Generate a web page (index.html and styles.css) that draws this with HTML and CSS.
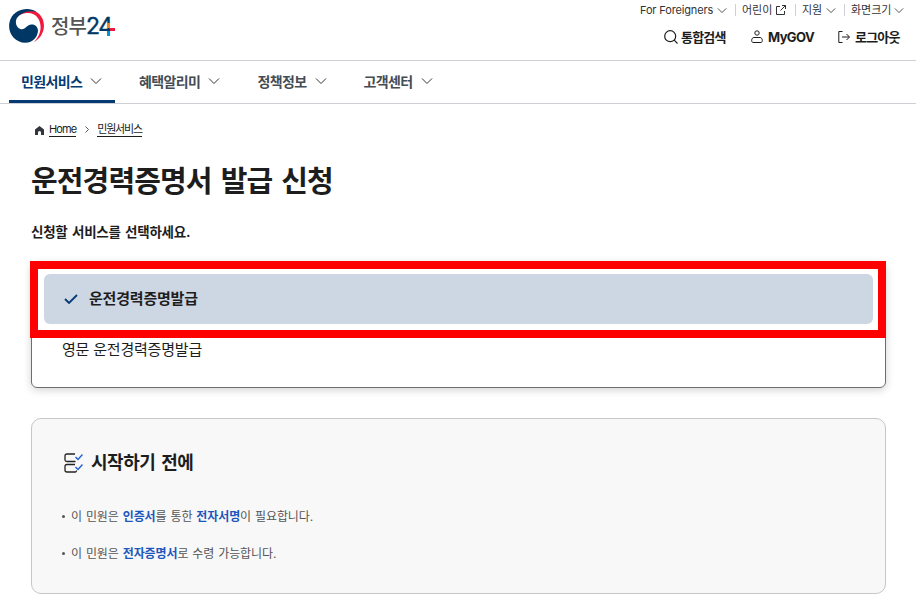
FILE: index.html
```html
<!DOCTYPE html>
<html lang="ko">
<head>
    <meta charset="UTF-8">
    <meta name="viewport" content="width=device-width, initial-scale=1.0">
    <title>운전경력증명서 발급 신청 | 정부24</title>
    <link rel="stylesheet" href="styles.css">
</head>
<body>
    <svg class="sprite" aria-hidden="true">
        <symbol id="chevron" viewBox="0 0 12 8">
            <path d="M1 1.5l5 5 5-5" fill="none" stroke="currentColor"/>
        </symbol>
    </svg>

    <header class="header">
        <a class="logo" href="#">
            <svg class="logo-mark" viewBox="0 0 105 101">
                <path d="M35 9C55-3 86 0 99 26C113 53 101 86 73 100C96 79 101 49 87 27C74 7 43 7 24 24C26 18 30 12 35 9z" fill="#f0193c"/>
                <path d="M84 9C58-9 18 0 5 29C-10 64 13 99 49 101C72 101 86 84 87 65C87 51 75 43 63 47C50 51 47 63 36 60C23 57 17 40 23 28C31 13 59 0 84 9z" fill="#003764"/>
            </svg>
            <span class="logo-name">정부</span>
            <span class="logo-number">24</span>
            <svg class="logo-plus" viewBox="0 0 9 13">
                <path d="M1 0h3v5H1z" fill="#f58220"/>
                <path d="M1 8h3v5H1z" fill="#0095da"/>
                <path d="M4 5h5v3H4z" fill="#ed1941"/>
            </svg>
        </a>

        <div class="header-links">
            <ul class="utility">
                <li class="foreigners"><a href="#">For Foreigners</a><svg class="chevron"><use href="#chevron"/></svg></li>
                <li class="kids"><a href="#">어린이</a>
                    <svg class="external" viewBox="0 0 10 10" fill="none" stroke="currentColor"><path d="M4 1.5H.5v8h8V6M6 .5h3.5V4M9.5.5L4.5 5.5"/></svg>
                </li>
                <li class="support"><a href="#">지원</a><svg class="chevron"><use href="#chevron"/></svg></li>
                <li class="zoom"><a href="#">화면크기</a><svg class="chevron"><use href="#chevron"/></svg></li>
            </ul>
            <ul class="account">
                <li class="search">
                    <svg width="14" height="14" viewBox="0 0 14 14" fill="none" stroke="currentColor" stroke-width="1.2"><circle cx="6.2" cy="6.2" r="5.5"/><path d="M10.2 10.2l3.3 3.3"/></svg>
                    <a href="#">통합검색</a>
                </li>
                <li class="mygov">
                    <svg width="12" height="13" viewBox="0 0 12 13" fill="none" stroke="currentColor"><circle cx="6" cy="3" r="2.2"/><path d="M3 7.5h6c1.3 0 2.3 1.3 2.3 2.8 0 1.4-.5 2.2-1.3 2.2H2c-.8 0-1.3-.8-1.3-2.2C.7 8.8 1.7 7.5 3 7.5z"/></svg>
                    <a href="#">MyGOV</a>
                </li>
                <li class="logout">
                    <svg width="12" height="12" viewBox="0 0 12 12" fill="none" stroke="currentColor"><path d="M4.5.5H.8v11h3.7M4 6h7.2M8.5 3l3 3-3 3"/></svg>
                    <a href="#">로그아웃</a>
                </li>
            </ul>
        </div>
    </header>

    <nav class="nav">
        <a class="nav-item active" href="#">민원서비스<svg class="chevron"><use href="#chevron"/></svg></a>
        <a class="nav-item" href="#">혜택알리미<svg class="chevron"><use href="#chevron"/></svg></a>
        <a class="nav-item" href="#">정책정보<svg class="chevron"><use href="#chevron"/></svg></a>
        <a class="nav-item" href="#">고객센터<svg class="chevron"><use href="#chevron"/></svg></a>
    </nav>

    <main class="content">
        <div class="breadcrumb">
            <svg class="home-icon" viewBox="0 0 9 9"><path d="M4.5 0L9 3.5V9H6V6.5a1.5 1.5 0 0 0-3 0V9H0V3.5z" fill="#33363d"/></svg>
            <a class="crumb-home" href="#">Home</a>
            <svg class="crumb-arrow" viewBox="0 0 4 7"><path d="M.5.5l3 3-3 3" fill="none" stroke="#555"/></svg>
            <a class="crumb-current" href="#">민원서비스</a>
        </div>

        <h1>운전경력증명서 발급 신청</h1>
        <p class="guide">신청할 서비스를 선택하세요.</p>

        <div class="service-list">
            <div class="service selected">
                <svg class="check" viewBox="0 0 14 10"><path d="M1 5l4 4 8-8" fill="none" stroke="#063a74" stroke-width="1.8"/></svg>
                <span>운전경력증명발급</span>
            </div>
            <div class="service">영문 운전경력증명발급</div>
            <div class="highlight"></div>
        </div>

        <section class="before">
            <h2>
                <svg class="list-icon" viewBox="0 0 19 20" fill="none" stroke="#222" stroke-width="1.3">
                    <path d="M11 1H3Q1 1 1 3v4q0 1.5 2 1.5h8.5M11 11.5H3q-2 0-2 2V17q0 2 2 2h8.5q1 0 1-1.5"/>
                    <path d="M11.500 4l2.500 2.500 4.500-5M11.500 14l2.500 2.500 4.500-5" stroke="#2563d4" stroke-width="1.5"/>
                </svg>
                <span>시작하기 전에</span>
            </h2>
            <ul>
                <li>이 민원은 <strong>인증서</strong>를 통한 <strong>전자서명</strong>이 필요합니다.</li>
                <li>이 민원은 <strong>전자증명서</strong>로 수령 가능합니다.</li>
            </ul>
        </section>
    </main>
</body>
</html>
```
FILE: styles.css
```css
* {
    box-sizing: border-box;
}
body {
    margin: 0;
    background-color: #fff;
    color: #1d1d1d;
    font-family: Inter, "Noto Sans CJK KR", sans-serif;
    white-space: nowrap;
    overflow: hidden;
}
ul {
    list-style: none;
    margin: 0;
    padding: 0;
}
a {
    color: inherit;
    text-decoration: none;
}
svg {
    flex: none;
}
.sprite {
    display: none;
}
.chevron {
    width: 12px;
    height: 8px;
}

/* header */
.header {
    display: flex;
    justify-content: space-between;
    height: 61px;
    padding-left: 9px;
    border-bottom: 1px solid #cdd1d5;
}
.logo {
    display: flex;
    align-items: center;
    height: 51px;
}
.logo-mark {
    width: 35px;
    height: 34px;
    margin-right: 7px;
}
.logo-name {
    width: 35px;
    font-size: 20px;
    font-weight: 500;
    letter-spacing: -1px;
    color: #555;
}
.logo-number {
    width: 28px;
    font-size: 23px;
    font-weight: 400;
    letter-spacing: -1.5px;
    color: #003764;
    -webkit-text-stroke: 0.4px #003764;
}
.logo-plus {
    width: 9px;
    height: 13px;
    margin: 8px 0 0 -8px;
}
.header-links {
    width: 276px;
}
.utility,
.account {
    display: flex;
    align-items: center;
}
.utility {
    height: 20px;
    font-size: 11px;
    line-height: 20px;
    color: #333;
}
.utility li {
    display: flex;
    align-items: center;
    height: 12px;
}
.utility li + li {
    border-left: 1px solid #cdd1d5;
    padding-left: 6px;
}
.utility .chevron {
    width: 10px;
    height: 7px;
}
.utility .foreigners {
    width: 95px;
    letter-spacing: -0.15px;
}
.utility .kids {
    width: 60px;
}
.utility .support {
    width: 49px;
}
.utility a {
    margin-right: 4px;
}
.utility .zoom a {
    margin-right: 3px;
}
.external {
    width: 10px;
    height: 10px;
}
.account {
    height: 33px;
    padding-left: 24px;
    font-size: 13px;
    font-weight: 700;
    letter-spacing: -0.8px;
}
.account li {
    display: flex;
    align-items: center;
    gap: 3px;
}
.account .search {
    width: 87px;
}
.account .mygov {
    width: 87px;
    gap: 5px;
    letter-spacing: -0.6px;
}
.account .logout {
    gap: 5px;
}

/* main menu */
.nav {
    display: flex;
    gap: 13px;
    height: 43px;
    padding-left: 9px;
    border-bottom: 1px solid #cdd1d5;
}
.nav-item {
    display: flex;
    align-items: center;
    gap: 8px;
    padding: 0 12px;
    font-size: 14px;
    font-weight: 700;
    letter-spacing: -0.6px;
    color: #464c53;
    border-bottom: 3px solid transparent;
}
.nav-item.active {
    width: 106px;
    margin-right: -1px;
    color: #063a74;
    border-bottom-color: #063a74;
}
.nav-item .chevron {
    color: #333;
}

/* content */
.content {
    padding: 0 30px 0 31px;
}
.breadcrumb {
    display: flex;
    align-items: center;
    height: 16px;
    margin-top: 17px;
    padding-left: 4px;
    font-size: 11px;
}
.breadcrumb a {
    height: 15px;
    line-height: 14px;
    border-bottom: 1px solid #1d1d1d;
}
.home-icon {
    width: 9px;
    height: 9px;
    margin: 2px 5px 0 0;
}
.crumb-home {
    letter-spacing: -0.9px;
}
.crumb-arrow {
    width: 4px;
    height: 7px;
    margin: 1px 8px 0 9px;
}
.crumb-current {
    letter-spacing: -1.2px;
}
h1 {
    margin: 23px 0 0;
    font-size: 29px;
    line-height: 44px;
    letter-spacing: -0.87px;
    word-spacing: 3px;
}
.guide {
    margin: 17px 0 0;
    font-size: 13.5px;
    font-weight: 700;
    line-height: 22px;
    letter-spacing: -0.25px;
    word-spacing: 1.5px;
}
.service-list {
    position: relative;
    height: 126px;
    margin-top: 19px;
    padding: 11px 12px;
    border: 1px solid #6d6d6d;
    border-radius: 6px;
    box-shadow: 0 2px 8px rgba(0, 0, 0, 0.18);
}
.service {
    height: 50px;
    padding-left: 18px;
    font-size: 15px;
    line-height: 51px;
    letter-spacing: -0.2px;
}
.service.selected {
    display: flex;
    align-items: center;
    gap: 11px;
    padding-left: 20px;
    border-radius: 6px;
    background-color: #cdd6e3;
    line-height: 50px;
    font-weight: 700;
}
.check {
    width: 14px;
    height: 10px;
}
/* red frame over the selected service */
.highlight {
    position: absolute;
    top: -2px;
    left: -2px;
    right: -1px;
    height: 77px;
    border: 8px solid #f00;
}

.before {
    height: 176px;
    margin-top: 30px;
    padding: 28px 29px;
    border: 1px solid #c6c6c6;
    border-radius: 10px;
    background-color: #f8f8f8;
}
h2 {
    display: flex;
    align-items: center;
    gap: 8px;
    margin: 0 0 21px;
    padding-left: 3px;
    font-size: 18px;
    line-height: 31px;
    letter-spacing: -0.45px;
    word-spacing: 2px;
}
.list-icon {
    width: 19px;
    height: 20px;
}
.before li {
    height: 37px;
    font-size: 12px;
    line-height: 35px;
    letter-spacing: -0.1px;
    word-spacing: 0.7px;
    color: #555;
}
.before li::before {
    content: "";
    display: inline-block;
    width: 3px;
    height: 3px;
    margin: 0 6px 3px 1px;
    border-radius: 50%;
    background-color: #555;
}
.before strong {
    color: #1d56bc;
}
```
